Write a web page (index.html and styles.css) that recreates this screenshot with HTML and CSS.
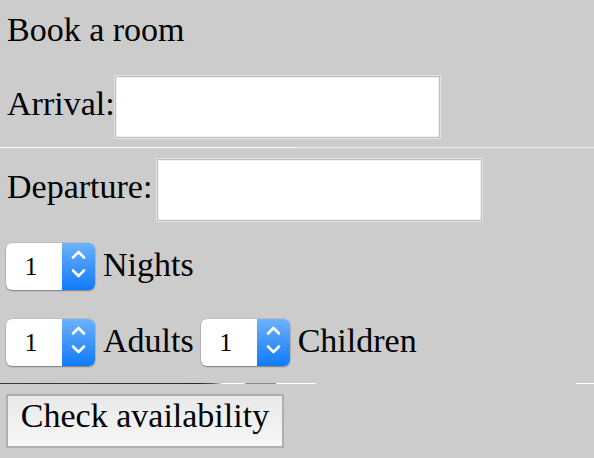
FILE: index.html
```html
<!DOCTYPE html>
<html>
<head>
<meta charset="utf-8">
<link rel="stylesheet" href="styles.css">
</head>
<body>
<form class="booking">
  <div class="title">Book a room</div>
  <div class="row field-row first-field">
    <label class="label">Arrival:</label><span class="text-input"></span>
  </div>
  <div class="rule rule-light"></div>
  <div class="row field-row second-field">
    <label class="label">Departure:</label><span class="text-input"></span>
  </div>
  <div class="row pick-row nights-row">
    <span class="select"><span class="select-value">1</span><span class="select-arrows"><svg width="33" height="47" viewBox="0 0 33 47"><polyline points="11,14.5 16.5,9 22,14.5" fill="none" stroke="#fff" stroke-width="2.6" stroke-linecap="round" stroke-linejoin="round"/><polyline points="11,27.5 16.5,33 22,27.5" fill="none" stroke="#fff" stroke-width="2.6" stroke-linecap="round" stroke-linejoin="round"/></svg></span></span>
    <span class="label">Nights</span>
  </div>
  <div class="row pick-row guests-row">
    <span class="select"><span class="select-value">1</span><span class="select-arrows"><svg width="33" height="47" viewBox="0 0 33 47"><polyline points="11,14.5 16.5,9 22,14.5" fill="none" stroke="#fff" stroke-width="2.6" stroke-linecap="round" stroke-linejoin="round"/><polyline points="11,27.5 16.5,33 22,27.5" fill="none" stroke="#fff" stroke-width="2.6" stroke-linecap="round" stroke-linejoin="round"/></svg></span></span>
    <span class="label">Adults</span>
    <span class="select"><span class="select-value">1</span><span class="select-arrows"><svg width="33" height="47" viewBox="0 0 33 47"><polyline points="11,14.5 16.5,9 22,14.5" fill="none" stroke="#fff" stroke-width="2.6" stroke-linecap="round" stroke-linejoin="round"/><polyline points="11,27.5 16.5,33 22,27.5" fill="none" stroke="#fff" stroke-width="2.6" stroke-linecap="round" stroke-linejoin="round"/></svg></span></span>
    <span class="label">Children</span>
  </div>
  <div class="rule rule-dark"></div>
  <div class="row button-row">
    <button type="button" class="check-btn">Check availability</button>
  </div>
</form>
</body>
</html>
```
FILE: styles.css
```css
html, body {
  margin: 0;
  padding: 0;
  background: #cccccc;
}
body {
  font-family: "Liberation Serif", "Times New Roman", serif;
  font-size: 34px;
  line-height: 40px;
  color: #000;
  width: 594px;
  height: 458px;
  overflow: hidden;
}
.booking {
  display: flex;
  flex-direction: column;
}
.title {
  margin-top: 10px;
  padding-left: 7px;
  height: 40px;
}
.row {
  display: flex;
  align-items: center;
}
.field-row {
  padding-left: 7px;
}
.field-row .label {
  padding-bottom: 7px;
}
.first-field {
  margin-top: 26px;
}
.second-field {
  margin-top: 11px;
}
.text-input {
  display: block;
  box-sizing: border-box;
  width: 325px;
  height: 62px;
  background: #fff;
  border: 1px solid #bdbdbd;
  box-shadow: 0 0 0 1px #e4e4e4, inset 0 0 0 1px #f2f2f2;
}
.second-field .text-input {
  margin-left: 5px;
}
.rule {
  height: 1px;
  width: 594px;
}
.rule-light {
  margin-top: 9px;
  background: linear-gradient(to right, #ffffff 0, #ffffff 296px, #e8e8e8 296px, #e8e8e8 100%);
}
.rule-dark {
  margin-top: 17px;
  background: linear-gradient(to right,
    #3a3a3a 0, #2a2a2a 200px, #5a5a5a 212px, #bdbdbd 220px,
    #ffffff 223px, #ffffff 244px, #8a8a8a 246px, #8a8a8a 276px,
    #ffffff 276px, #ffffff 316px, #cccccc 316px, #cccccc 576px,
    #ffffff 576px, #ffffff 100%);
}
.pick-row {
  padding-left: 6px;
  gap: 8px;
}
.pick-row .label {
  padding-bottom: 3px;
  margin-right: -1px;
}
.nights-row {
  margin-top: 22px;
}
.guests-row {
  margin-top: 29px;
}
.select {
  display: flex;
  width: 89px;
  height: 47px;
  border-radius: 6px;
  overflow: hidden;
  box-shadow: 0 1px 1.5px rgba(0, 0, 0, 0.35), 0 0 0 0.5px rgba(0, 0, 0, 0.12);
  background: #fff;
}
.select-value {
  width: 56px;
  text-align: center;
  font-size: 26px;
  line-height: 47px;
  padding-right: 6px;
  box-sizing: border-box;
}
.select-arrows {
  width: 33px;
  height: 47px;
  display: block;
  background: linear-gradient(to bottom, #6db2fb 0%, #3e95fb 50%, #0f7bfb 100%);
}
.select-arrows svg {
  display: block;
}
.button-row {
  margin-top: 10px;
  padding-left: 6px;
}
.check-btn {
  box-sizing: border-box;
  width: 278px;
  height: 54px;
  margin: 0;
  padding: 2px 0 12px 0;
  border: 2px solid #afafaf;
  border-radius: 0;
  background: linear-gradient(to bottom, #e9e9e9 0%, #f7f7f7 100%);
  font-family: "Liberation Serif", "Times New Roman", serif;
  font-size: 34px;
  line-height: 36px;
  color: #000;
  text-align: center;
}
```
